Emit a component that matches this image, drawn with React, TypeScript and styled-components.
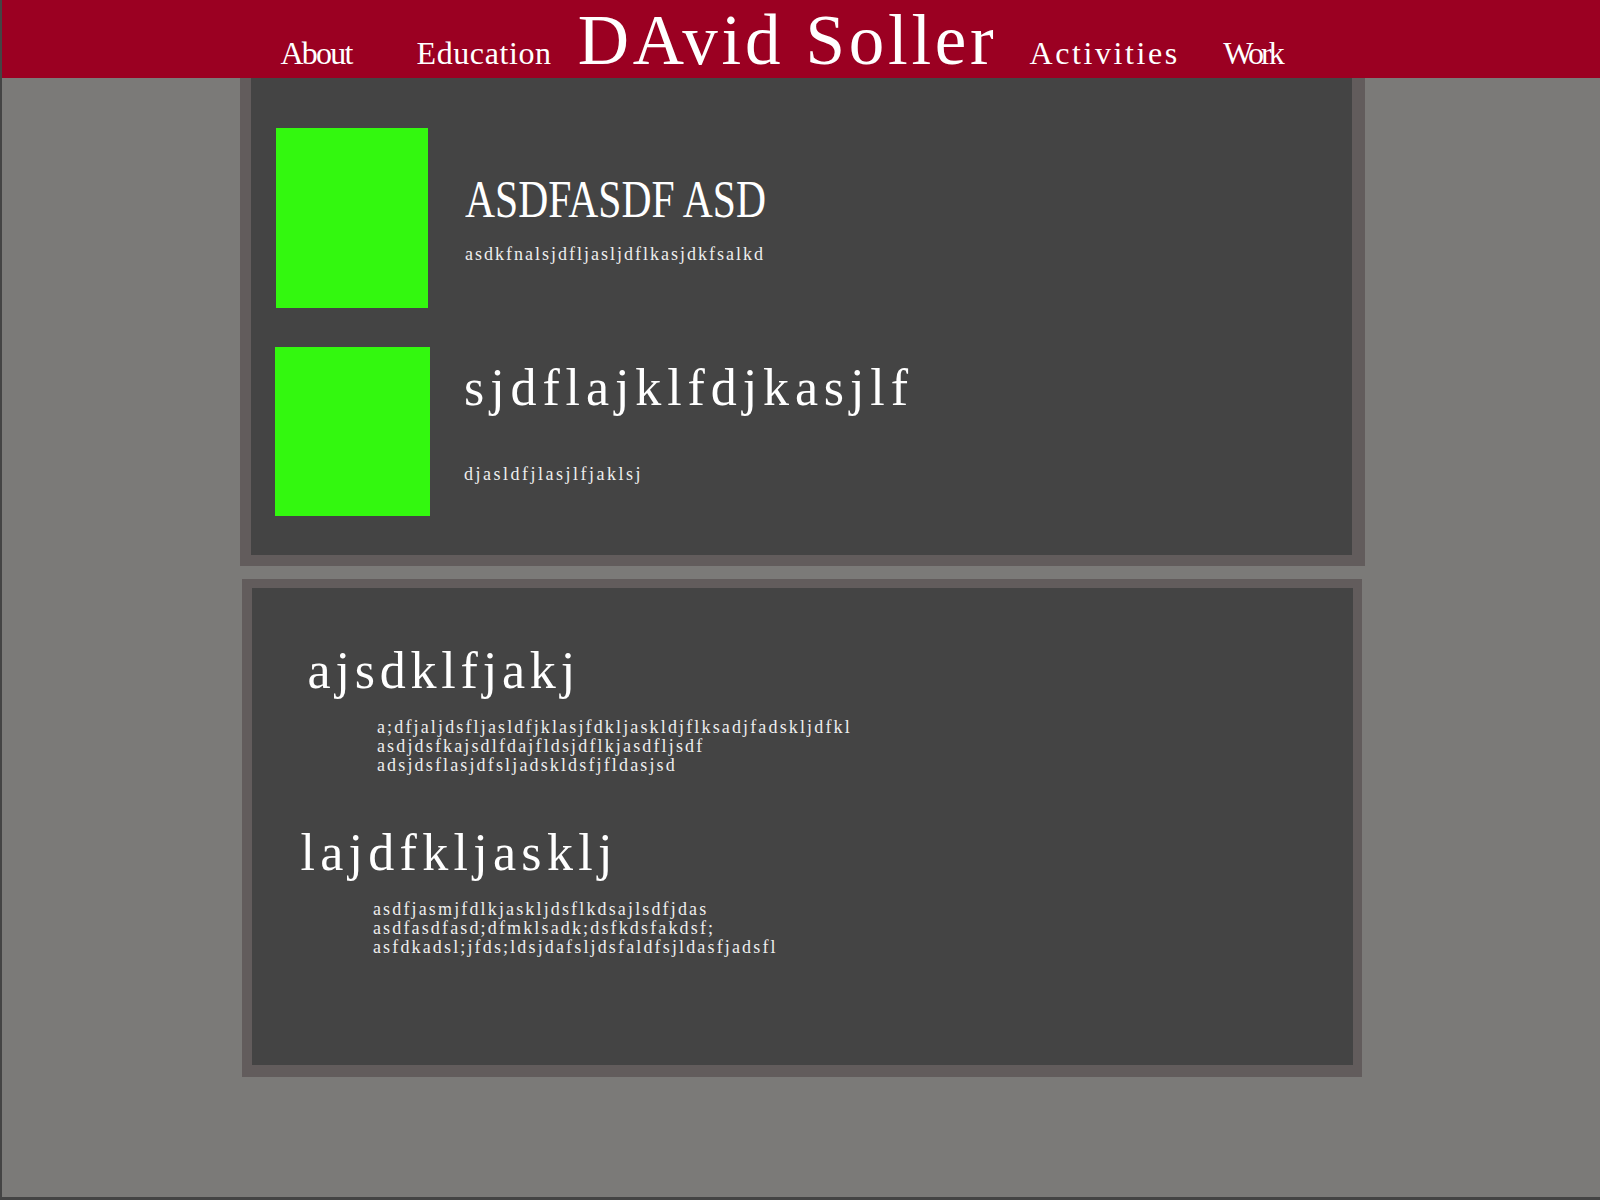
import styled, { createGlobalStyle } from "styled-components";

const GlobalStyle = createGlobalStyle`
  html, body {
    margin: 0;
    padding: 0;
  }

  body {
    background: #7b7a78;
    font-family: "Liberation Serif", "Times New Roman", serif;
  }
`;

const FEATURES = [
  {
    title: "ASDFASDF ASD",
    blurb: "asdkfnalsjdfljasljdflkasjdkfsalkd",
    caps: true,
    offset: 25,
    gap: 37,
    swatch: { w: 152, h: 180 },
    top: 46,
    blurbGap: 19,
    track: 0,
    blurbTrack: 2,
  },
  {
    title: "sjdflajklfdjkasjlf",
    blurb: "djasldfjlasjlfjaklsj",
    caps: false,
    offset: 24,
    gap: 34,
    swatch: { w: 155, h: 169 },
    top: 14.5,
    blurbGap: 51.5,
    track: 5.9,
    blurbTrack: 2.5,
  },
];

const ENTRIES = [
  {
    title: "ajsdklfjakj",
    lines: [
      "a;dfjaljdsfljasldfjklasjfdkljaskldjflksadjfadskljdfkl",
      "asdjdsfkajsdlfdajfldsjdflkjasdfljsdf",
      "adsjdsflasjdfsljadskldsfjfldasjsd",
    ],
    indent: 55.6,
    top: 56.75,
    bodyIndent: 69.4,
    bodyGap: 21,
    track: 4.8,
  },
  {
    title: "lajdfkljasklj",
    lines: [
      "asdfjasmjfdlkjaskljdsflkdsajlsdfjdas",
      "asdfasdfasd;dfmklsadk;dsfkdsfakdsf;",
      "asfdkadsl;jfds;ldsjdafsljdsfaldfsjldasfjadsfl",
    ],
    indent: 48.4,
    top: 52.5,
    bodyIndent: 72.6,
    bodyGap: 20.25,
    track: 5.3,
  },
];

export default function App() {
  return (
    <>
      <GlobalStyle />
      <Frame>
        <Header>
          <Nav>
            <NavGroup $gap={65}>
              <NavLink $track={-1.8}>About</NavLink>
              <NavLink $track={0.6}>Education</NavLink>
            </NavGroup>
            <Title>DAvid Soller</Title>
            <NavGroup $gap={43.5}>
              <NavLink $track={2.6}>Activities</NavLink>
              <NavLink $track={-3}>Work</NavLink>
            </NavGroup>
          </Nav>
        </Header>

        <Panel $ml={238} $mt={0} $w={1125} $h={488} $border="0 13px 11px 11px">
          <FeatureList>
            {FEATURES.map((f) => (
              <Feature key={f.title} $ml={f.offset} $gap={f.gap}>
                <Swatch $w={f.swatch.w} $h={f.swatch.h} />
                <FeatureText $top={f.top}>
                  <FeatureTitle $caps={f.caps} $track={f.track}>
                    {f.title}
                  </FeatureTitle>
                  <Blurb $gap={f.blurbGap} $track={f.blurbTrack}>
                    {f.blurb}
                  </Blurb>
                </FeatureText>
              </Feature>
            ))}
          </FeatureList>
        </Panel>

        <Panel $ml={240} $mt={13} $w={1120} $h={498} $border="9px 9px 12px 10px">
          {ENTRIES.map((e) => (
            <Entry key={e.title} $indent={e.indent} $top={e.top}>
              <EntryTitle $track={e.track}>{e.title}</EntryTitle>
              <EntryBody $indent={e.bodyIndent} $gap={e.bodyGap}>
                {e.lines.map((line, i) => (
                  <span key={i}>
                    {line}
                    {i < e.lines.length - 1 && <br />}
                  </span>
                ))}
              </EntryBody>
            </Entry>
          ))}
        </Panel>
      </Frame>
    </>
  );
}

const Frame = styled.div`
  box-sizing: border-box;
  width: 1600px;
  height: 1200px;
  border-left: 2px solid #444444;
  border-bottom: 3px solid #444444;
  background: #7b7a78;
  overflow: hidden;
`;

const Header = styled.header`
  height: 78px;
  background: #9b0022;
  color: #ffffff;
`;

const Nav = styled.nav`
  display: flex;
  align-items: baseline;
  padding: 4.5px 0 0 278.5px;
`;

const NavGroup = styled.div<{ $gap: number }>`
  display: flex;
  align-items: baseline;
  gap: ${(p) => p.$gap}px;
`;

const NavLink = styled.a<{ $track: number }>`
  font-size: 32px;
  line-height: 1;
  letter-spacing: ${(p) => p.$track}px;
  color: #ffffff;
  text-decoration: none;
  white-space: nowrap;
  cursor: pointer;
`;

const Title = styled.h1`
  margin: 0 32px 0 26px;
  font-size: 71px;
  line-height: 71px;
  font-weight: 400;
  letter-spacing: 3.7px;
  white-space: nowrap;
  color: #ffffff;
`;

const Panel = styled.section<{
  $ml: number;
  $mt: number;
  $w: number;
  $h: number;
  $border: string;
}>`
  box-sizing: border-box;
  width: ${(p) => p.$w}px;
  height: ${(p) => p.$h}px;
  margin: ${(p) => p.$mt}px 0 0 ${(p) => p.$ml}px;
  border-style: solid;
  border-color: #625c5c;
  border-width: ${(p) => p.$border};
  background: #444444;
  color: #ffffff;
`;

const FeatureList = styled.div`
  display: flex;
  flex-direction: column;
  gap: 39px;
  padding-top: 50px;
`;

const Feature = styled.div<{ $ml: number; $gap: number }>`
  display: flex;
  align-items: flex-start;
  gap: ${(p) => p.$gap}px;
  margin-left: ${(p) => p.$ml}px;
`;

const Swatch = styled.div<{ $w: number; $h: number }>`
  flex: none;
  width: ${(p) => p.$w}px;
  height: ${(p) => p.$h}px;
  background: #33f80f;
`;

const FeatureText = styled.div<{ $top: number }>`
  display: flex;
  flex-direction: column;
  align-items: flex-start;
  padding-top: ${(p) => p.$top}px;
`;

const FeatureTitle = styled.h2<{ $caps: boolean; $track: number }>`
  margin: 0;
  font-size: 52px;
  line-height: 1;
  font-weight: 400;
  white-space: nowrap;
  letter-spacing: ${(p) => p.$track}px;
  transform-origin: left center;
  transform: ${(p) => (p.$caps ? "scaleX(0.8)" : "none")};
`;

const Blurb = styled.p<{ $gap: number; $track: number }>`
  margin: ${(p) => p.$gap}px 0 0;
  font-size: 18px;
  line-height: 1;
  letter-spacing: ${(p) => p.$track}px;
  color: #eeeeee;
  white-space: nowrap;
`;

const Entry = styled.article<{ $indent: number; $top: number }>`
  padding-left: ${(p) => p.$indent}px;
  margin-top: ${(p) => p.$top}px;
`;

const EntryTitle = styled.h2<{ $track: number }>`
  margin: 0;
  font-size: 52px;
  line-height: 1;
  font-weight: 400;
  letter-spacing: ${(p) => p.$track}px;
  white-space: nowrap;
`;

const EntryBody = styled.p<{ $indent: number; $gap: number }>`
  margin: ${(p) => p.$gap}px 0 0 ${(p) => p.$indent}px;
  font-size: 18px;
  line-height: 19px;
  letter-spacing: 2.15px;
  color: #eeeeee;
  white-space: nowrap;
`;
